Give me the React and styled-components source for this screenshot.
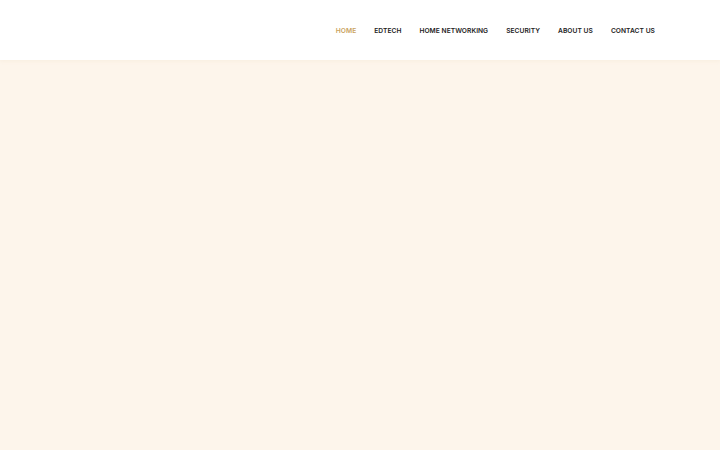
import React from "react";
import styled, { createGlobalStyle } from "styled-components";

const Global = createGlobalStyle`
  html, body { margin: 0; padding: 0; }
  body { background: #fdf5eb; font-family: "Inter", "Liberation Sans", sans-serif; }
`;

const Page = styled.div`
  min-height: 450px;
  display: flex;
  flex-direction: column;
`;

const Header = styled.header`
  height: 60px;
  box-sizing: border-box;
  padding: 2px 65px 0 0;
  background: #ffffff;
  display: flex;
  align-items: center;
  justify-content: flex-end;
  box-shadow: 0 1px 4px rgba(230, 210, 180, 0.2);
  position: relative;
  z-index: 1;
`;

const Nav = styled.nav`
  display: flex;
  gap: 18px;
  align-items: center;
`;

const NavLink = styled.a`
  font-size: 6.65px;
  font-weight: 600;
  letter-spacing: 0.05px;
  text-transform: uppercase;
  color: ${(p) => (p.$active ? "#c9a25e" : "#222222")};
  text-decoration: none;
  white-space: nowrap;
`;

const Hero = styled.main`
  flex: 1;
  background: #fdf5eb;
`;

const items = ["Home", "Edtech", "Home Networking", "Security", "About Us", "Contact Us"];

export default function App() {
  return (
    <Page>
      <Global />
      <Header>
        <Nav>
          {items.map((t, i) => (
            <NavLink key={t} href="#" $active={i === 0}>
              {t}
            </NavLink>
          ))}
        </Nav>
      </Header>
      <Hero />
    </Page>
  );
}
